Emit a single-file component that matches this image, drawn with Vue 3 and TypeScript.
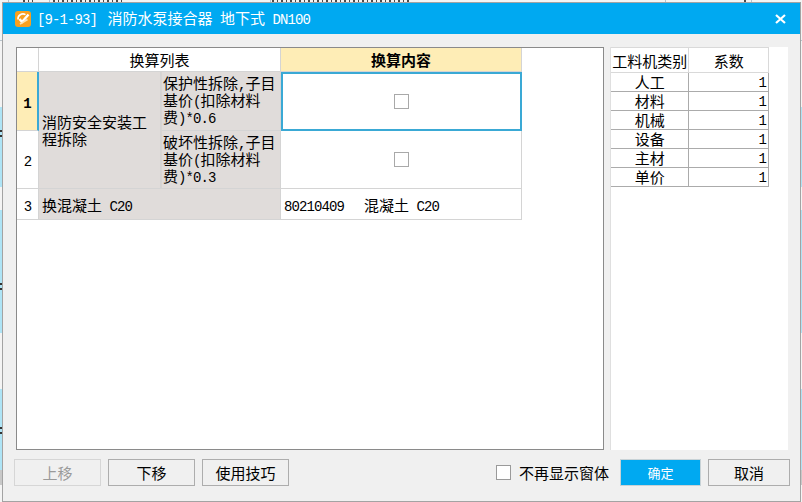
<script setup lang="ts">
interface FactorRow { name: string; value: number }
const factors: FactorRow[] = [
  { name: '人工', value: 1 },
  { name: '材料', value: 1 },
  { name: '机械', value: 1 },
  { name: '设备', value: 1 },
  { name: '主材', value: 1 },
  { name: '单价', value: 1 },
]
const edgeMarks: number[] = [130, 283, 427]
</script>

<template>
  <div class="screen">
    <div class="backdrop-top">
      <span class="specks" style="width: 10px; margin-left: 23px"></span>
      <span class="specks" style="width: 72px; margin-left: 20px"></span>
      <span class="specks" style="width: 138px; margin-left: 147px"></span>
      <span class="specks" style="width: 5px; margin-left: 334px"></span>
    </div>
    <span v-for="y in edgeMarks" :key="y" class="edge-mark" :style="{ top: y + 'px' }"></span>
    <section class="dialog">
      <header class="titlebar">
        <svg class="logo" width="16" height="16" viewBox="0 0 16 16">
          <rect x="0" y="0" width="16" height="16" rx="3" fill="#f9a01f" />
          <path d="M3 8.5 A5 5 0 0 1 10.5 3.6" fill="none" stroke="#fff" stroke-width="1.6" />
          <path d="M4.5 8 L7 11 L13.5 3.5" fill="none" stroke="#fff" stroke-width="2.4" />
          <path d="M5 13 L12.5 8.5" fill="none" stroke="#fde3b5" stroke-width="1.6" />
        </svg>
        <span class="title"><span class="lat title-code">[9-1-93]&nbsp;</span>消防水泵接合器<span class="lat">&nbsp;</span>地下式<span class="lat">&nbsp;DN100</span></span>
        <svg class="close" width="11" height="10" viewBox="0 0 11 10">
          <path d="M1 1 L10 9 M10 1 L1 9" stroke="#fff" stroke-width="2.2" fill="none" />
        </svg>
      </header>

      <div class="content">
        <div class="main-panel">
          <table class="grid">
            <colgroup>
              <col style="width: 22px" />
              <col style="width: 122px" />
              <col style="width: 120px" />
              <col style="width: 241px" />
            </colgroup>
            <thead>
              <tr class="head-row">
                <th class="blank"></th>
                <th colspan="2" class="plain">换算列表</th>
                <th class="accent">换算内容</th>
              </tr>
            </thead>
            <tbody>
              <tr class="r1">
                <td class="num current"><span class="lat">1</span></td>
                <td rowspan="2" class="grey span-name">消防安全安装工<br />程拆除</td>
                <td class="grey sub">保护性拆除<span class="lat">,</span>子目<br />基价<span class="lat">(</span>扣除材料<br />费<span class="lat">)*0.6</span></td>
                <td class="check selected"><span class="box"></span></td>
              </tr>
              <tr class="r2">
                <td class="num"><span class="lat">2</span></td>
                <td class="grey sub">破坏性拆除<span class="lat">,</span>子目<br />基价<span class="lat">(</span>扣除材料<br />费<span class="lat">)*0.3</span></td>
                <td class="check"><span class="box"></span></td>
              </tr>
              <tr class="r3">
                <td class="num"><span class="lat">3</span></td>
                <td colspan="2" class="grey single">换混凝土<span class="lat">&nbsp;C20</span></td>
                <td class="single"><span class="lat code">80210409</span>混凝土<span class="lat">&nbsp;C20</span></td>
              </tr>
            </tbody>
          </table>
        </div>

        <aside class="side-panel">
          <table class="factors">
            <colgroup>
              <col style="width: 78px" />
              <col style="width: 79px" />
            </colgroup>
            <thead>
              <tr>
                <th>工料机类别</th>
                <th>系数</th>
              </tr>
            </thead>
            <tbody>
              <tr v-for="row in factors" :key="row.name">
                <td class="name">{{ row.name }}</td>
                <td class="value"><span class="lat">{{ row.value }}</span></td>
              </tr>
            </tbody>
          </table>
        </aside>
      </div>

      <footer class="footer">
        <div class="left-actions">
          <button class="btn disabled" type="button" disabled>上移</button>
          <button class="btn" type="button">下移</button>
          <button class="btn" type="button">使用技巧</button>
        </div>
        <label class="remember">
          <span class="remember-box"></span>
          <span>不再显示窗体</span>
        </label>
        <div class="right-actions">
          <button class="btn primary" type="button">确定</button>
          <button class="btn cancel" type="button">取消</button>
        </div>
      </footer>
    </section>
  </div>
</template>

<style>
html, body { margin: 0; overflow: hidden; }
</style>

<style scoped>
.screen {
  width: 802px;
  height: 502px;
  box-sizing: border-box;
  padding: 2px 0 0 2px;
  position: relative;
  overflow: hidden;
  font-family: "Noto Sans CJK SC", sans-serif;
  font-size: 15px;
  color: #000;
  background:
    linear-gradient(to right,
      transparent 0 8px, #b4c2cc 8px 9px, transparent 9px 49px, #b4c2cc 49px 50px,
      transparent 50px 270px, #b4c2cc 270px 271px, transparent 271px 665px, #b4c2cc 665px 666px,
      transparent 666px 751px, #b4c2cc 751px 752px, transparent 752px) top left / 100% 3px no-repeat,
    linear-gradient(to bottom,
      #f4f4f4 0 40px, #b8c4cc 40px 41px, #f4f4f4 41px 107px,
      #aee4f6 107px 187px, #f4f4f4 187px 210px, #aee4f6 210px 333px,
      #f4f4f4 333px 389px, #aee4f6 389px 470px, #c8c8c8 470px 485px, #f4f4f4 485px 502px);
}
.backdrop-top {
  position: absolute;
  left: 0;
  top: 0;
  height: 2px;
  display: flex;
}
.specks {
  display: block;
  flex: none;
  height: 2px;
  background: repeating-linear-gradient(to right, #4a4a4a 0 2px, transparent 2px 5px, #4a4a4a 5px 6px, transparent 6px 9px);
}
.edge-mark {
  position: absolute;
  left: 0;
  width: 2px;
  height: 7px;
  background: linear-gradient(to bottom, #333 0 2px, transparent 2px 5px, #333 5px 7px);
}
.lat {
  font-family: "Liberation Mono", monospace;
  font-size: 14px;
  letter-spacing: -0.9px;
  white-space: pre;
  line-height: 0;
}
.dialog {
  position: relative;
  width: 799px;
  height: 500px;
  box-sizing: border-box;
  border: 1px solid #a3a3a3;
  background: #f0f0f0;
  display: flex;
  flex-direction: column;
}
.titlebar {
  height: 31px;
  flex: none;
  background: #00a9f1;
  color: #fff;
  display: flex;
  align-items: center;
  padding: 0 14px 0 12px;
}
.logo { flex: none; margin-right: 6px; }
.title { flex: 1; white-space: pre; line-height: 20px; position: relative; top: -1px; }
.title-code { margin-right: 3px; }
.close { flex: none; }
.content {
  display: flex;
  height: 403px;
  margin-top: 13px;
  padding-left: 13px;
  flex: none;
}
.main-panel {
  width: 588px;
  height: 403px;
  box-sizing: border-box;
  background: #fff;
  border: 1px solid #8a8a8a;
  flex: none;
}
.grid {
  border-collapse: separate;
  border-spacing: 0;
  table-layout: fixed;
  width: 505px;
}
.grid th, .grid td {
  padding: 0;
  border-right: 1px solid #d4d4d4;
  border-bottom: 1px solid #d4d4d4;
  font-weight: 400;
  line-height: 17px;
  box-sizing: border-box;
}
.head-row th { height: 24px; text-align: center; }
.grid .accent { background: #feedb6; font-weight: 700; }
.r1 td { height: 59px; }
.r2 td { height: 58px; }
.r3 td { height: 31px; }
.num { text-align: center; background: #fff; }
.num.current { background: #feedb6; border-right: 2px solid #3aa9d5 !important; }
.num.current .lat { font-weight: 700; }
.grey { background: #e0dcda; }
.grid .span-name { padding: 0 3px; white-space: nowrap; }
.grid .sub { padding: 0 2px 3px 1px; white-space: nowrap; border-left: 1px solid #d8d4d2; }
.grid .single { padding: 0 3px; white-space: nowrap; }
.code { margin-right: 20px; }
.check { vertical-align: middle; }
.box {
  display: block;
  width: 15px;
  height: 15px;
  margin: 0 auto;
  box-sizing: border-box;
  border: 1px solid #a9a9a9;
}
.selected { outline: 2px solid #3aa9d5; outline-offset: -2px; }
.side-panel {
  width: 178px;
  height: 403px;
  box-sizing: border-box;
  margin-left: 6px;
  background: #fff;
  border-left: 1px solid #dfdfdf;
  flex: none;
}
.factors {
  border-collapse: separate;
  border-spacing: 0;
  table-layout: fixed;
  width: 158px;
}
.factors th {
  height: 26px;
  box-sizing: border-box;
  padding: 0;
  font-weight: 400;
  text-align: center;
  white-space: nowrap;
  border-top: 1px solid #d9d9d9;
  border-right: 1px solid #d9d9d9;
  border-bottom: 1px solid #d9d9d9;
  line-height: 17px;
}
.factors td {
  height: 19px;
  box-sizing: border-box;
  padding: 0;
  line-height: 18px;
  border-right: 1px solid #ababab;
  border-bottom: 1px solid #ababab;
}
.factors .name { text-align: center; }
.factors .value { text-align: right; padding: 3px 2px 0 0; }
.factors .value .lat { display: block; line-height: 15px; }
.footer {
  display: flex;
  align-items: center;
  height: 27px;
  margin-top: 9px;
  padding: 0 9px 0 11px;
  flex: none;
}
.left-actions { display: flex; gap: 7px; }
.right-actions { display: flex; gap: 7px; }
.btn {
  width: 87px;
  height: 27px;
  padding: 0;
  background: #f0f0f0;
  border: 1px solid #adadad;
  font: inherit;
  color: #000;
  line-height: 25px;
}
.btn.disabled { color: #9a9a9a; border-color: #d6d6d6; }
.btn.primary { width: 81px; background: #00a9f1; border-color: #c8d2d6; color: #fff; font-size: 13px; }
.btn.cancel { width: 82px; }
.remember {
  display: flex;
  align-items: center;
  margin-left: 207px;
  margin-right: 12px;
  width: 112px;
  white-space: nowrap;
}
.remember-box {
  width: 15px;
  height: 15px;
  box-sizing: border-box;
  background: #fff;
  border: 1px solid #9a9a9a;
  margin-right: 8px;
  flex: none;
}
</style>
